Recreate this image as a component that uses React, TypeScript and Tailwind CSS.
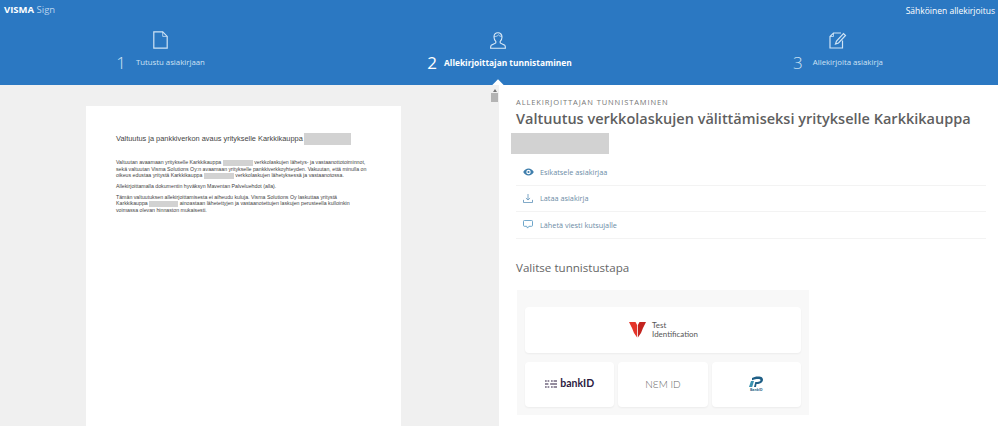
import React from "react";

const sans = "font-['Open_Sans','Noto_Sans',sans-serif]";

function Redact({ w, h, className = "" }: { w: number; h: number; className?: string }) {
  return <span className={"inline-block bg-[#d2d2d2] align-middle " + className} style={{ width: w, height: h }} />;
}

function DocIcon() {
  return (
    <svg width="15" height="18" viewBox="0 0 15 18" fill="none" stroke="#cfe3f5" strokeWidth="1.2">
      <path d="M.8.8h8.900l4.500 4.600v11.800H.8z" />
      <path d="M9.700.8v4.600h4.500" strokeWidth="0.8" />
    </svg>
  );
}

function PersonIcon() {
  return (
    <svg width="16" height="17" viewBox="0 0 16 17" fill="none" stroke="#dcebf8" strokeWidth="1.1" className="-ml-[3px]">
      <path d="M8 .8C5.600.8 4 2.600 4 5c0 1.900.8 3.400 1.800 4.300v1.500c-.9.9-3.200 1.300-4.500 2.400-.5.5-.7 1.300-.7 3h14.800c0-1.700-.2-2.500-.7-3-1.300-1.100-3.600-1.500-4.500-2.400V9.300C11.200 8.400 12 6.900 12 5 12 2.600 10.400.8 8 .8z" />
      <path d="M4.300 4.500C6 4.600 7.500 4 8.500 2.900c.6.900 1.800 1.500 3.200 1.600" strokeWidth="0.8" />
    </svg>
  );
}

function SignIcon() {
  return (
    <svg width="18" height="17" viewBox="0 0 18 17" fill="none" stroke="#cfe3f5" strokeWidth="1.2">
      <path d="M12 1H4.500L1 4.500V16h12.500V8.500" />
      <path d="M1 4.500h3.500V1" strokeWidth="0.8" />
      <path d="M6.500 12l1-3L14.500 1.500l2 2L9.500 11z" />
    </svg>
  );
}

function Step({ n, label, active, icon, size, gap }: { n: string; label: string; active?: boolean; icon: React.ReactNode; size: string; gap: string }) {
  return (
    <div className="flex flex-col items-center">
      <div className="h-[18px] flex items-center">{icon}</div>
      <div className="mt-[2px] flex items-center h-[24px]">
        <span className={"text-[17px] " + gap + " " + (active ? "font-normal text-white" : "font-light text-[#cfe3f5]")}>{n}</span>
        <span className={size + " " + (active ? "font-bold text-white" : "text-[#cfe3f5]")}>{label}</span>
      </div>
    </div>
  );
}

function Action({ icon, label }: { icon: React.ReactNode; label: string }) {
  return (
    <div className="h-[26.5px] flex items-center pl-[4px] border-b border-[#f3f3f3]">
      <span className="w-[16px] h-[14px] flex items-center justify-center mr-[4px]">{icon}</span>
      <span className="text-[7.3px] text-[#6b8ba5]">{label}</span>
    </div>
  );
}

function Card({ children, className = "" }: { children: React.ReactNode; className?: string }) {
  return (
    <div className={"bg-white rounded-[4px] shadow-[0_1px_2px_rgba(0,0,0,0.05)] flex items-center justify-center " + className}>
      {children}
    </div>
  );
}

export default function App() {
  return (
    <div className={"w-[998px] h-[426px] overflow-hidden flex flex-col bg-white " + sans}>
      <header className="h-[85px] bg-[#2b78c2] relative shrink-0 flex flex-col">
        <div className="h-[20px] flex items-center justify-between pl-[4px] pr-[3px] pt-[1px]">
          <div className="text-[9.5px] text-white">
            <span className="font-bold">VISMA</span> <span className="text-[#b8d4ee]">Sign</span>
          </div>
          <div className="text-[8.5px] text-white pt-[1px]">Sähköinen allekirjoitus</div>
        </div>
        <div className="flex mt-[11px]">
          <div className="w-[321px] flex justify-center"><Step n="1" label="Tutustu asiakirjaan" size="text-[7.8px]" gap="mr-[10px]" icon={<DocIcon />} /></div>
          <div className="w-[357px] flex justify-center"><Step n="2" label="Allekirjoittajan tunnistaminen" size="text-[8.4px]" gap="mr-[7px]" active icon={<PersonIcon />} /></div>
          <div className="w-[320px] flex justify-center"><Step n="3" label="Allekirjoita asiakirja" size="text-[7.8px]" gap="mr-[10px]" icon={<SignIcon />} /></div>
        </div>
        <div className="absolute left-[494px] top-[81px] w-[8px] h-[8px] bg-white rotate-45" />
      </header>
      <main className="flex flex-1 min-h-0">
        <div className="w-[490px] bg-[#f0f0f0] pl-[86px] pt-[21px] shrink-0">
          <div className="w-[315px] h-[400px] bg-white pt-[26px] pl-[30px] pr-[28px] font-['Liberation_Sans',sans-serif] text-[#444]">
            <div className="text-[7.4px] leading-[14px] flex items-center whitespace-nowrap">
              Valtuutus ja pankkiverkon avaus yritykselle Karkkikauppa<Redact w={47} h={12} className="ml-[1px]" />
            </div>
            <div className="mt-[13px] text-[5.24px] leading-[6.4px] whitespace-nowrap">
              <div>Valtuutan avaamaan yritykselle Karkkikauppa <Redact w={30} h={6} /> verkkolaskujen lähetys- ja vastaanottotoiminnot,</div>
              <div>sekä valtuutan Visma Solutions Oy:n avaamaan yritykselle pankkiverkkoyhteyden. Vakuutan, että minulla on</div>
              <div>oikeus edustaa yritystä Karkkikauppa <Redact w={30} h={6} /> verkkolaskujen lähetyksessä ja vastaanotossa.</div>
              <div className="mt-[4.5px]">Allekirjoittamalla dokumentin hyväksyn Maventan Palveluehdot (alla).</div>
              <div className="mt-[4.5px]">Tämän valtuutuksen allekirjoittamisesta ei aiheudu kuluja. Visma Solutions Oy laskuttaa yritystä</div>
              <div>Karkkikauppa <Redact w={29} h={6} /> ainoastaan lähetettyjen ja vastaanotettujen laskujen perusteella kulloinkin</div>
              <div>voimassa olevan hinnaston mukaisesti.</div>
            </div>
          </div>
        </div>
        <div className="w-[9px] bg-[#f0f0f0] shrink-0 flex flex-col items-center relative">
          <div className="w-0 h-0 mt-[4px] border-x-[2px] border-x-transparent border-b-[3px] border-b-[#777]" />
          <div className="w-[7px] h-[9px] mt-[1px] bg-[#b4b4b4]" />
        </div>
        <div className="flex-1 min-w-0 pl-[17px] pr-[12px] pt-[12px]">
          <div className="text-[7.5px] leading-[11px] tracking-[0.9px] text-[#777]">ALLEKIRJOITTAJAN TUNNISTAMINEN</div>
          <div className="mt-[1px] text-[14.5px] leading-[20px] font-semibold text-[#5f5f5f] whitespace-nowrap">
            Valtuutus verkkolaskujen välittämiseksi yritykselle Karkkikauppa
          </div>
          <Redact w={98} h={21} className="block -ml-[5px] mt-[2px]" />
          <div className="mt-[5px]">
            <Action
              label="Esikatsele asiakirjaa"
              icon={
                <svg width="11" height="8" viewBox="0 0 11 8" fill="#3f7eac">
                  <path fillRule="evenodd" d="M.2 4C1.400 1.700 3.300.5 5.500.5S9.600 1.700 10.800 4C9.600 6.300 7.700 7.500 5.500 7.500S1.400 6.300.2 4zm5.300 2.200a2.200 2.200 0 1 0 0-4.400 2.200 2.200 0 0 0 0 4.400zm0-1.100a1.100 1.100 0 1 1 0-2.200 1.100 1.100 0 0 1 0 2.200z" />
                </svg>
              }
            />
            <Action
              label="Lataa asiakirja"
              icon={
                <svg width="10" height="9" viewBox="0 0 11 10" fill="none" stroke="#6d9cc0" strokeWidth="1">
                  <path d="M5.500 0v6.500M3.200 4.500l2.300 2.200 2.300-2.200M.5 6.500v3h10v-3" />
                </svg>
              }
            />
            <Action
              label="Lähetä viesti kutsujalle"
              icon={
                <svg width="10" height="9" viewBox="0 0 11 10" fill="none" stroke="#5d9cc4" strokeWidth="1">
                  <path d="M1.500.5h8a1 1 0 0 1 1 1v4.500a1 1 0 0 1-1 1H6.500L5 9 4 7H1.500a1 1 0 0 1-1-1V1.500a1 1 0 0 1 1-1z" />
                </svg>
              }
            />
          </div>
          <div className="mt-[20px] text-[11.6px] leading-[17px] text-[#666]">Valitse tunnistustapa</div>
          <div className="mt-[14px] ml-[1px] w-[292px] h-[125px] bg-[#f8f8f8] px-[8px] pt-[17px]">
            <Card className="h-[46px] gap-[6px]">
              <svg width="17" height="16" viewBox="0 0 17 16" className="ml-[1px]">
                <path d="M0 0h6.500l1.600 3v12.500L5 11 3 6z" fill="#e4352b" />
                <path d="M17 0h-6.500L8.900 3v12.500L12 11l2-5z" fill="#c3241f" />
              </svg>
              <div className="text-[7.9px] leading-[9px] text-[#555] font-['Lato',sans-serif]">
                Test<br />Identification
              </div>
            </Card>
            <div className="grid grid-cols-3 gap-[4px] mt-[9px]">
              <Card className="h-[45px] gap-[3px]">
                <svg width="12" height="8" viewBox="0 0 14 8" fill="#2b1a3f">
                  <path d="M0 0h2v1H0zM3 0h2v1H3zM0 3.500h4v1H0zM0 7h2v1H0zM3 7h2v1H3zM7 0h2v1H7zM10 0h4v1h-4zM6 3.500h8v1H6zM7 7h2v1H7zM10 7h4v1h-4z" />
                </svg>
                <span className="text-[10.5px] font-bold text-[#2b1a3f] font-['Lato',sans-serif]">bankID</span>
              </Card>
              <Card>
                <span className="text-[10px] font-light text-[#666] font-['Lato',sans-serif]">NƐM ID</span>
              </Card>
              <Card>
                <div className="flex flex-col items-center">
                  <svg width="15" height="12" viewBox="0 0 15 12">
                    <path d="M0 11l2-6h3L3.200 11z" fill="#3c93b1" />
                    <path d="M3 2c2-1.500 6-2 8.500-1.300 2.600.8 3.300 3.200 1.600 5.200-1.300 1.500-3.300 2-5.600 2L7 11H5l1.300-5h2c1.700 0 3-.5 3.200-1.700.2-1.300-2-1.600-4-1.300-1.300.2-3 .7-4.500 1.300z" fill="#1f5f86" />
                  </svg>
                  <span className="text-[3.5px] leading-[4px] font-bold text-[#1f5f86]">BankID</span>
                </div>
              </Card>
            </div>
          </div>
        </div>
      </main>
    </div>
  );
}
